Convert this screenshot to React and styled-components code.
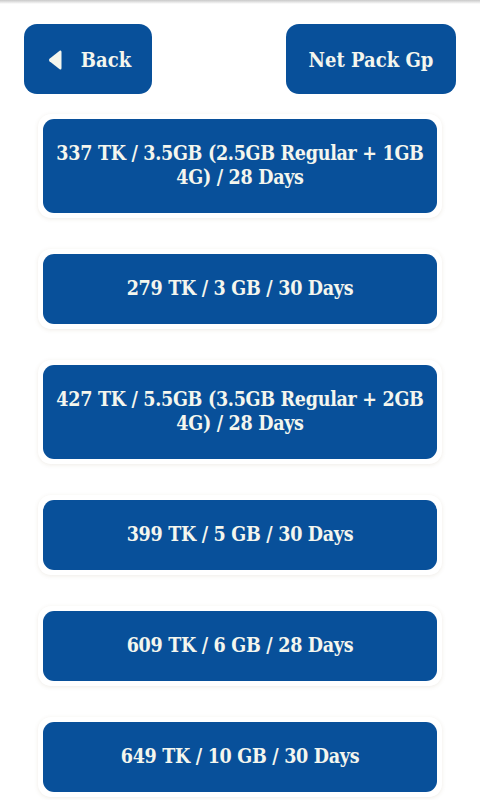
import React from "react";
import styled, { createGlobalStyle } from "styled-components";

const GlobalStyle = createGlobalStyle`
  body {
    margin: 0;
    background: #ffffff;
    font-family: "DejaVu Serif Condensed", "DejaVu Serif", "Liberation Serif", serif;
  }
`;

const Page = styled.div`
  width: 480px;
  min-height: 800px;
  background: #fff;
`;

const TopShadow = styled.div`
  height: 4px;
  background: linear-gradient(#c9c9c9, rgba(255, 255, 255, 0));
`;

const Header = styled.div`
  display: flex;
  justify-content: space-between;
  padding: 20px 24px 0;
`;

const HeaderButton = styled.button`
  display: flex;
  align-items: center;
  justify-content: center;
  gap: 19px;
  width: ${(p) => p.$width}px;
  height: 70px;
  border: none;
  border-radius: 13px;
  background: #08509a;
  color: #f4f6ee;
  font-family: inherit;
  font-weight: bold;
  font-size: 20px;
  padding: ${(p) => (p.$back ? "2px 0 0 3px" : "2px 0 0")};
  cursor: pointer;
`;

const List = styled.div`
  display: flex;
  flex-direction: column;
  gap: 31px;
  padding: 20px 38px 0;
`;

const Card = styled.div`
  padding: 5px;
  border-radius: 13px;
  background: #fff;
  box-shadow: 0 1px 4px rgba(120, 100, 60, 0.12);
`;

const PackButton = styled.button`
  display: block;
  width: 100%;
  padding: 23px 8px;
  border: none;
  border-radius: 11px;
  background: #08509a;
  color: #f4f6ee;
  font-family: inherit;
  font-weight: bold;
  font-size: 19.5px;
  line-height: 24px;
  letter-spacing: -0.3px;
  text-align: center;
  cursor: pointer;
`;

const BackArrow = () => (
  <svg width="14" height="22" viewBox="0 0 14 22">
    <path d="M12 1.5 Q13.5 1 13.5 3 L13.5 19 Q13.5 21 12 20.5 L1.5 12.3 Q0.3 11 1.5 9.7 Z" fill="#f4f6ee" />
  </svg>
);

const packs = [
  "337 TK / 3.5GB (2.5GB Regular + 1GB 4G) / 28 Days",
  "279 TK / 3 GB / 30 Days",
  "427 TK / 5.5GB (3.5GB Regular + 2GB 4G) / 28 Days",
  "399 TK / 5 GB / 30 Days",
  "609 TK / 6 GB / 28 Days",
  "649 TK / 10 GB / 30 Days",
];

export default function App() {
  return (
    <Page>
      <GlobalStyle />
      <TopShadow />
      <Header>
        <HeaderButton $width={128} $back>
          <BackArrow />
          Back
        </HeaderButton>
        <HeaderButton $width={170}>Net Pack Gp</HeaderButton>
      </Header>
      <List>
        {packs.map((pack) => (
          <Card key={pack}>
            <PackButton>{pack}</PackButton>
          </Card>
        ))}
      </List>
    </Page>
  );
}
